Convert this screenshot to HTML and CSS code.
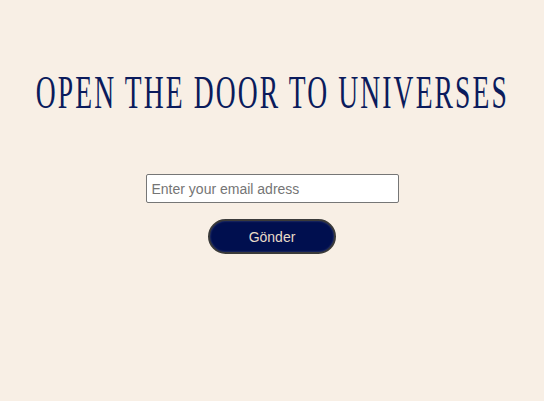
FILE: index.html
```html
<!DOCTYPE html>
<html lang="en">
<head>
<meta charset="utf-8">
<title>Open the door</title>
<link rel="stylesheet" href="styles.css">
</head>
<body>
<main class="page">
  <h1 class="title"><span class="title-text">OPEN THE DOOR TO UNIVERSES</span></h1>
  <form class="form">
    <input class="email" type="email" placeholder="Enter your email adress">
    <button class="send" type="button">Gönder</button>
  </form>
</main>
</body>
</html>
```
FILE: styles.css
```css
html, body {
  margin: 0;
  padding: 0;
}
body {
  background: #f8efe5;
  width: 544px;
  height: 401px;
  overflow: hidden;
}
.page {
  display: flex;
  flex-direction: column;
  align-items: center;
}
.title {
  align-self: stretch;
  display: flex;
  justify-content: center;
  overflow: hidden;
  margin: 66px 0 0;
  font-family: "Liberation Serif", serif;
  font-weight: normal;
  font-size: 46px;
  line-height: 54px;
  color: #0b1b5c;
  white-space: nowrap;
}
.title-text {
  flex: none;
  display: inline-block;
  transform: scaleX(0.6);
  letter-spacing: 3.5px;
}
.form {
  margin-top: 54px;
  display: flex;
  flex-direction: column;
  align-items: center;
  gap: 16px;
}
.email {
  box-sizing: border-box;
  width: 253px;
  height: 29px;
  margin: 0;
  padding: 1px 5px;
  border: 1px solid #767676;
  border-radius: 2px;
  background: #fff;
  font-family: "Liberation Sans", Arial, sans-serif;
  font-size: 14px;
  color: #333;
}
.email::placeholder {
  color: #757575;
}
.send {
  box-sizing: border-box;
  width: 128px;
  height: 35px;
  border: 2px solid #3a3a3a;
  border-radius: 18px;
  background: #000f4f;
  color: #e8dcc8;
  font-family: "Liberation Sans", Arial, sans-serif;
  font-size: 14px;
  box-shadow: inset 0 0 2px rgba(255,255,255,0.3);
}
```
